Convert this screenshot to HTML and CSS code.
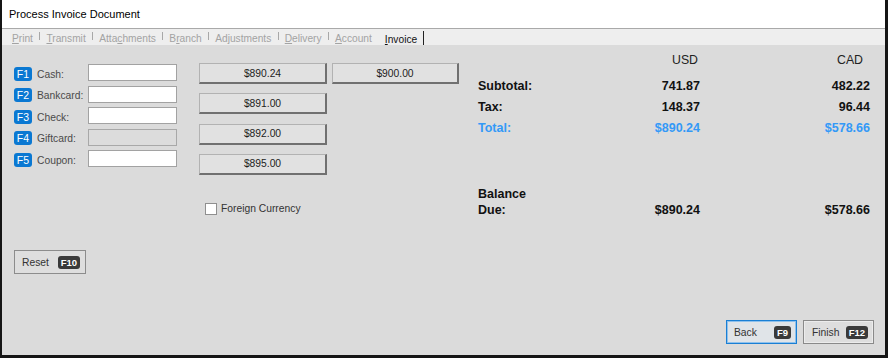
FILE: index.html
```html
<!DOCTYPE html>
<html>
<head>
<meta charset="utf-8">
<link rel="stylesheet" href="styles.css">
</head>
<body>
<div class="window">
  <div class="titlebar">Process Invoice Document</div>
  <div class="tabs">
    <span class="tab"><u>P</u>rint</span><span class="sep"></span>
    <span class="tab"><u>T</u>ransmit</span><span class="sep"></span>
    <span class="tab">Atta<u>c</u>hments</span><span class="sep"></span>
    <span class="tab">B<u>r</u>anch</span><span class="sep"></span>
    <span class="tab">Ad<u>j</u>ustments</span><span class="sep"></span>
    <span class="tab"><u>D</u>elivery</span><span class="sep"></span>
    <span class="tab"><u>A</u>ccount</span>
    <span class="tab active"><u>I</u>nvoice</span>
  </div>
  <div class="content">
    <div class="main">
      <div class="fields">
        <div class="field"><span class="fkey">F1</span><span class="flabel">Cash:</span><span class="input"></span></div>
        <div class="field"><span class="fkey">F2</span><span class="flabel">Bankcard:</span><span class="input"></span></div>
        <div class="field"><span class="fkey">F3</span><span class="flabel">Check:</span><span class="input"></span></div>
        <div class="field"><span class="fkey">F4</span><span class="flabel">Giftcard:</span><span class="input disabled"></span></div>
        <div class="field"><span class="fkey">F5</span><span class="flabel">Coupon:</span><span class="input"></span></div>
      </div>
      <div class="quick">
        <div class="qrow"><button class="qbtn">$890.24</button><button class="qbtn wide2">$900.00</button></div>
        <div class="qrow"><button class="qbtn">$891.00</button></div>
        <div class="qrow"><button class="qbtn">$892.00</button></div>
        <div class="qrow"><button class="qbtn">$895.00</button></div>
        <label class="check"><span class="box"></span>Foreign Currency</label>
      </div>
      <div class="totals">
        <div class="hdr"></div><div class="hdr usd">USD</div><div class="hdr cad">CAD</div>
        <div class="lbl r1">Subtotal:</div><div class="val r1">741.87</div><div class="val r1">482.22</div>
        <div class="lbl r2">Tax:</div><div class="val r2">148.37</div><div class="val r2">96.44</div>
        <div class="lbl r3 blue">Total:</div><div class="val r3 blue">$890.24</div><div class="val r3 blue">$578.66</div>
        <div class="lbl bal">Balance<br>Due:</div><div class="val bal">$890.24</div><div class="val bal">$578.66</div>
      </div>
    </div>
    <div class="resetrow">
      <button class="btn reset">Reset<span class="dkey">F10</span></button>
    </div>
    <div class="footer">
      <button class="btn back">Back<span class="dkey">F9</span></button>
      <button class="btn finish">Finish<span class="dkey">F12</span></button>
    </div>
  </div>
</div>
</body>
</html>
```
FILE: styles.css
```css
* { box-sizing: border-box; }
html, body { margin: 0; padding: 0; background: #dadada; }
body { font-family: "Liberation Sans", Arial, sans-serif; }

.window {
  width: 888px;
  height: 358px;
  border-left: 2px solid #151515;
  border-right: 3px solid #151515;
  border-bottom: 3px solid #151515;
  background: #dbdbdb;
  display: flex;
  flex-direction: column;
}

.titlebar {
  height: 29px;
  background: #fff;
  border-bottom: 1px solid #a9a9a9;
  padding: 1px 0 0 7px;
  line-height: 27px;
  font-size: 11px;
  color: #000;
}

.tabs {
  height: 16px;
  background: #eeeeee;
  display: flex;
  align-items: center;
  padding-left: 10px;
  font-size: 10.2px;
  color: #a3a3a3;
}
.tab { line-height: 16px; padding-top: 3px; }
.tab u { text-decoration-thickness: 1px; text-underline-offset: 1px; }
.sep {
  width: 1px;
  height: 8px;
  background: #a8a8a8;
  margin: -3px 6px 0 6.5px;
}
.tab.active {
  color: #111;
  margin-left: 13px;
  padding-right: 6px;
  border-right: 1px solid #222;
  height: 14px;
  line-height: 14px;
  padding-top: 2px;
  margin-top: 2px;
}

.content {
  flex: 1;
  display: flex;
  flex-direction: column;
}

.main {
  display: flex;
  align-items: flex-start;
  height: 173px;
}

.fields {
  margin: 19px 0 0 12px;
  width: 163px;
  display: flex;
  flex-direction: column;
  gap: 4.5px;
}
.field { display: flex; align-items: center; height: 17px; }
.fkey {
  width: 18px;
  height: 14px;
  margin-top: 2px;
  border-radius: 3px;
  background: #0a78d2;
  color: #fff;
  font-size: 10.5px;
  line-height: 14px;
  text-align: center;
  margin-right: 5px;
}
.flabel {
  width: 51px;
  font-size: 10.3px;
  color: #4a4a4a;
  padding-top: 3px;
}
.input {
  width: 89px;
  height: 17px;
  background: #fff;
  border: 1px solid #a2a2a2;
}
.input.disabled { background: #dcdcdc; border-color: #a8a8a8; }

.quick {
  margin: 18px 0 0 22px;
  width: 260px;
  display: flex;
  flex-direction: column;
  gap: 9.3px;
}
.qrow { display: flex; gap: 5px; }
.qbtn {
  width: 128px;
  height: 21px;
  padding: 0;
  font-family: "Liberation Sans", Arial, sans-serif;
  font-size: 10.3px;
  color: #222;
  background: #e1e1e1;
  border: 1px solid;
  border-color: #b2b2b2 #707070 #707070 #b2b2b2;
  border-width: 1px 2px 2px 1px;
}
.qbtn.wide2 { width: 127px; }

.check {
  display: flex;
  align-items: center;
  margin: 18.5px 0 0 6px;
  font-size: 10.3px;
  color: #333;
}
.box {
  width: 12px;
  height: 12px;
  background: #fff;
  border: 1px solid #8f8f8f;
  margin-right: 4px;
}

.totals {
  margin-left: 19px;
  display: grid;
  grid-template-columns: 120px 102px 170px;
  grid-template-rows: 30px 22px 21px 21px 79px;
  font-size: 12.5px;
  color: #111;
}
.hdr {
  font-size: 12.3px;
  color: #222;
  text-align: right;
  line-height: 30px;
}
.hdr.usd { padding-right: 2px; }
.hdr.cad { padding-right: 7px; }
.lbl { font-weight: bold; line-height: 21px; }
.val { font-weight: bold; text-align: right; line-height: 21px; }
.r1 { line-height: 22px; }
.blue { color: #3399f7; }
.lbl.bal, .val.bal {
  align-self: end;
  line-height: 16px;
  padding-bottom: 0;
}

.resetrow {
  margin: 32px 0 0 12px;
}
.btn {
  font-family: "Liberation Sans", Arial, sans-serif;
  font-size: 10.3px;
  color: #333;
  display: inline-flex;
  align-items: center;
  justify-content: space-between;
  background: #dedede;
  border: 1px solid #8c8c8c;
  padding: 0 5px 0 7px;
}
.reset { width: 72px; height: 24px; }
.dkey {
  background: #3a3a3a;
  color: #fff;
  border-radius: 3px;
  font-size: 9.5px;
  font-weight: bold;
  height: 13px;
  line-height: 13px;
  padding: 0 3px;
  margin-top: 1px;
}

.footer {
  margin: 46px 11px 0 0;
  display: flex;
  justify-content: flex-end;
  gap: 6px;
}
.back {
  width: 71px;
  height: 24px;
  border: 1px solid #1a7fd4;
  box-shadow: inset 0 0 0 1px #8fc1ec;
  background: #e0e4e8;
  padding-left: 7px;
}
.finish {
  width: 71px;
  height: 24px;
  border: 1px solid #8a8a8a;
  box-shadow: inset 0 0 0 1px #ececec;
  padding-left: 8px;
}
```
